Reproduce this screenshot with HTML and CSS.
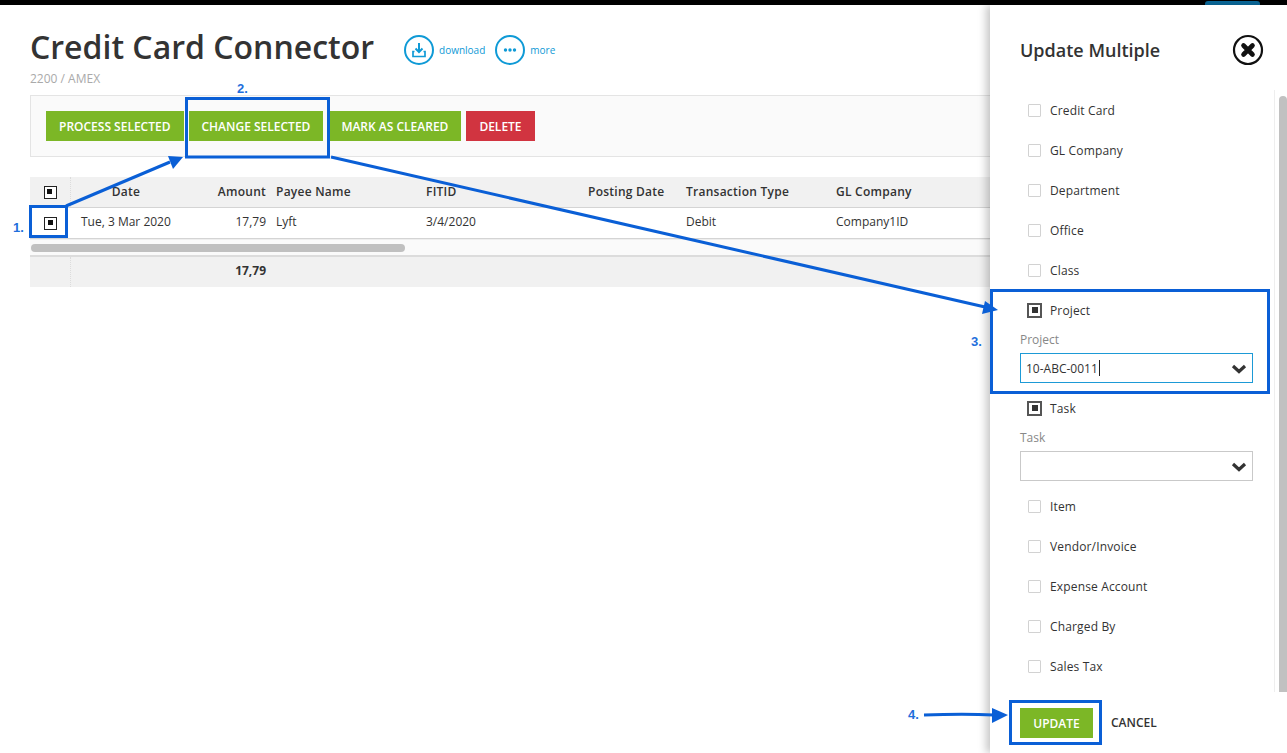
FILE: index.html
```html
<!DOCTYPE html>
<html lang="en">
<head>
<meta charset="utf-8">
<title>Credit Card Connector</title>
<link rel="stylesheet" href="styles.css">
</head>
<body>
<div class="topbar"><span class="toptab"></span></div>
<main class="main">
  <div class="titlerow">
    <h1 class="title">Credit Card Connector</h1>
    <div class="actions">
      <a class="action">
        <svg class="action-icon" width="30" height="30" viewBox="0 0 30 30"><circle cx="15" cy="15" r="14" fill="none" stroke="#0f9ad6" stroke-width="2"/><path d="M15 8v9M11.5 13.5 15 17l3.500-3.500" fill="none" stroke="#0f9ad6" stroke-width="2"/><path d="M10.500 16.500H9v5h12v-5h-1.500" fill="none" stroke="#0f9ad6" stroke-width="1.700"/></svg>
        <span>download</span>
      </a>
      <a class="action">
        <svg class="action-icon" width="30" height="30" viewBox="0 0 30 30"><circle cx="15" cy="15" r="14" fill="none" stroke="#0f9ad6" stroke-width="2"/><circle cx="10.500" cy="15" r="1.700" fill="#0f9ad6"/><circle cx="15" cy="15" r="1.700" fill="#0f9ad6"/><circle cx="19.500" cy="15" r="1.700" fill="#0f9ad6"/></svg>
        <span>more</span>
      </a>
    </div>
  </div>
  <div class="subtitle">2200 / AMEX</div>
  <div class="toolbar">
    <button class="btn">PROCESS SELECTED</button>
    <button class="btn">CHANGE SELECTED</button>
    <button class="btn">MARK AS CLEARED</button>
    <button class="btn btn-red">DELETE</button>
  </div>
  <div class="table">
    <div class="row row-head">
      <div class="cell-check"><span class="check check-table"></span></div>
      <div class="cell cell-center">Date</div>
      <div class="cell cell-right">Amount</div>
      <div class="cell">Payee Name</div>
      <div class="cell">FITID</div>
      <div class="cell">Posting Date</div>
      <div class="cell">Transaction Type</div>
      <div class="cell">GL Company</div>
    </div>
    <div class="row row-body">
      <div class="cell-check"><span class="check check-table"></span></div>
      <div class="cell cell-date">Tue, 3 Mar 2020</div>
      <div class="cell cell-right">17,79</div>
      <div class="cell">Lyft</div>
      <div class="cell">3/4/2020</div>
      <div class="cell"></div>
      <div class="cell">Debit</div>
      <div class="cell">Company1ID</div>
    </div>
    <div class="hscroll"><span class="hthumb"></span></div>
    <div class="row row-total">
      <div class="cell-check"></div>
      <div class="cell"></div>
      <div class="cell cell-right">17,79</div>
    </div>
  </div>
</main>

<aside class="panel">
  <header class="panel-head">
    <h2 class="panel-title">Update Multiple</h2>
    <svg class="close" width="32" height="32" viewBox="0 0 32 32"><circle cx="16" cy="16" r="14" fill="#fff" stroke="#111" stroke-width="2.200"/><path d="M11.500 11.500l9 9M20.500 11.500l-9 9" stroke="#111" stroke-width="4.600" stroke-linecap="round"/></svg>
  </header>
  <div class="panel-body">
    <div class="panel-list">
      <label class="opt"><span class="box"></span>Credit Card</label>
      <label class="opt"><span class="box"></span>GL Company</label>
      <label class="opt"><span class="box"></span>Department</label>
      <label class="opt"><span class="box"></span>Office</label>
      <label class="opt"><span class="box"></span>Class</label>
      <label class="opt"><span class="check check-panel"></span>Project</label>
      <div class="field">
        <div class="field-label">Project</div>
        <div class="select select-active"><span>10-ABC-0011</span><i class="caret"></i>
          <svg class="chev" width="16" height="10" viewBox="0 0 16 10"><path d="M2 2l6 5.500L14 2" fill="none" stroke="#333" stroke-width="3.200"/></svg>
        </div>
      </div>
      <label class="opt"><span class="check check-panel"></span>Task</label>
      <div class="field">
        <div class="field-label">Task</div>
        <div class="select">
          <svg class="chev" width="16" height="10" viewBox="0 0 16 10"><path d="M2 2l6 5.500L14 2" fill="none" stroke="#333" stroke-width="3.200"/></svg>
        </div>
      </div>
      <label class="opt"><span class="box"></span>Item</label>
      <label class="opt"><span class="box"></span>Vendor/Invoice</label>
      <label class="opt"><span class="box"></span>Expense Account</label>
      <label class="opt"><span class="box"></span>Charged By</label>
      <label class="opt"><span class="box"></span>Sales Tax</label>
    </div>
    <div class="vscroll"><span class="vthumb"></span></div>
  </div>
  <footer class="panel-foot">
    <button class="btn btn-update">UPDATE</button>
    <a class="cancel">CANCEL</a>
  </footer>
</aside>

<svg class="notes" width="1287" height="753" viewBox="0 0 1287 753">
  <g fill="none" stroke="#0a5fd6" stroke-width="3">
    <rect x="30.500" y="206.500" width="36" height="30"/>
    <rect x="186.500" y="98.500" width="142" height="58.500"/>
    <rect x="991.500" y="290.500" width="277" height="102"/>
    <rect x="1010.500" y="701.500" width="90" height="42"/>
    <path d="M66 206 170 162"/>
    <path d="M331 157 985 307"/>
    <path d="M924 715C950 714 975 714 994 715"/>
  </g>
  <g fill="#0a5fd6">
    <path d="M183 157 168 156 173 169Z"/>
    <path d="M998 310 985 301 982 314Z"/>
    <path d="M1008 715 992 708 992 723Z"/>
  </g>
</svg>
<span class="note note-1">1.</span>
<span class="note note-2">2.</span>
<span class="note note-3">3.</span>
<span class="note note-4">4.</span>
</body>
</html>
```
FILE: styles.css
```css
* { box-sizing: border-box; }
html, body { margin: 0; padding: 0; }
body {
  width: 1287px;
  height: 753px;
  overflow: hidden;
  position: relative;
  background: #fff;
  color: #333;
  font-family: "Open Sans", "Liberation Sans", sans-serif;
  font-size: 12px;
}
.topbar {
  height: 5px;
  background: #000;
  display: flex;
  justify-content: flex-end;
  align-items: flex-end;
  padding-right: 27px;
}
.toptab {
  width: 55px;
  height: 4px;
  background: #0a6a9c;
  border-radius: 3px 3px 0 0;
}
.main { padding: 22px 0 0 30px; width: 990px; }
.titlerow { display: flex; align-items: center; height: 40px; }
.title {
  margin: 0;
  font-size: 32px;
  line-height: 40px;
  font-weight: 600;
  color: #333;
}
.actions { display: flex; align-items: center; gap: 10px; margin-left: 30px; margin-top: 6px; }
.action { display: flex; align-items: center; gap: 5px; color: #0f9ad6; font-size: 10px; }
.action-icon { display: block; }
.subtitle { height: 28px; padding-top: 4px; line-height: 16px; color: #aaa; font-size: 12px; }
.toolbar {
  height: 62px;
  border: 1px solid #e4e4e4;
  border-right: 0;
  background: #fafafa;
  display: flex;
  align-items: center;
  gap: 5px;
  padding: 0 15px;
}
.btn {
  height: 30px;
  padding: 0 13px;
  border: 0;
  background: #7cb726;
  color: #fff;
  font-family: inherit;
  font-size: 12px;
  font-weight: 600;
  white-space: nowrap;
}
.btn-red { background: #d13440; }
.table { margin-top: 20px; }
.row {
  display: grid;
  grid-template-columns: 41px 110px 90px 150px 162px 98px 150px 149px;
  align-items: center;
}
.cell { padding: 0 5px 4px; white-space: nowrap; }
.cell-check { display: flex; justify-content: center; align-items: center; height: 100%; }
.cell-center { text-align: center; }
.cell-right { text-align: right; }
.cell-date { padding-left: 10px; }
.row-head {
  height: 31px;
  background: #f1f1f1;
  border-bottom: 1px solid #d4d4d4;
  font-weight: 600;
  letter-spacing: .25px;
}
.row-head .cell { padding-bottom: 2px; }
.row-head .cell-check, .row-total .cell-check { border-right: 1px dotted #dcdcdc; }
.row-body { height: 31px; border-bottom: 1px solid #d4d4d4; }
.hscroll {
  height: 18px;
  background: #fafafa;
  border-top: 1px solid #eee;
  border-bottom: 2px solid #dcdcdc;
  display: flex;
  align-items: center;
  padding-left: 1px;
}
.hthumb { width: 374px; height: 8px; background: #c0c0c0; border-radius: 4px; }
.row-total { height: 30px; background: #f1f1f1; font-weight: 700; }
.check { display: block; border-style: solid; border-color: #222; background: #fff; position: relative; }
.check::after { content: ""; position: absolute; background: #111; }
.check-table { width: 13px; height: 13px; border-width: 1.500px; }
.check-table::after { left: 2.500px; top: 2.500px; width: 5px; height: 5px; }
.check-panel { width: 15px; height: 15px; border-width: 2px; border-color: #555; margin: 0 8px 0 7px; }
.check-panel::after { left: 2.500px; top: 2.500px; width: 6px; height: 6px; background: #333; }
.panel {
  position: absolute;
  top: 5px;
  left: 990px;
  width: 297px;
  height: 748px;
  background: #fff;
  box-shadow: -4px 0 8px rgba(0, 0, 0, .22);
  display: flex;
  flex-direction: column;
}
.panel-head {
  height: 85px;
  flex: none;
  padding: 5px 23px 0 30px;
  display: flex;
  justify-content: space-between;
  align-items: center;
}
.panel-title { margin: 0; font-size: 18px; font-weight: 600; color: #333; }
.close { display: block; }
.panel-body { height: 602px; flex: none; display: flex; overflow: hidden; }
.panel-list { width: 285px; border-right: 1px solid #eee; padding: 0 22px 0 30px; flex: none; }
.vscroll { flex: 1; padding: 6px 0 0 4px; }
.vthumb { display: block; width: 8px; height: 596px; background: #c1c1c1; border-radius: 4px 4px 0 0; }
.opt { height: 40px; display: flex; align-items: center; font-size: 12px; color: #333; letter-spacing: .15px; }
.box {
  width: 13px;
  height: 13px;
  border: 1.500px solid #d2d2d2;
  border-radius: 1px;
  background: #fff;
  margin: 0 9px 0 8px;
}
.field { height: 58px; }
.field-label { height: 23px; line-height: 19px; color: #888; font-size: 12px; }
.select {
  width: 233px;
  height: 30px;
  border: 1px solid #c9c9c9;
  display: flex;
  align-items: center;
  padding: 0 5px;
  position: relative;
  font-size: 12px;
}
.select-active { border-color: #1d9ad6; }
.caret { display: block; width: 1px; height: 16px; background: #222; margin-left: 1px; }
.chev { position: absolute; right: 5px; top: 10px; }
.panel-foot {
  flex: 1;
  padding: 16px 0 0 30px;
  display: flex;
  align-items: flex-start;
  gap: 18px;
  background: #fff;
}
.btn-update { padding: 0; width: 73px; }
.cancel { line-height: 30px; font-weight: 600; color: #333; }
.notes { position: absolute; left: 0; top: 0; pointer-events: none; }
.note {
  position: absolute;
  font-family: "Liberation Sans", Arial, sans-serif;
  font-weight: 700;
  font-size: 13px;
  line-height: 14px;
  color: #1f6fdc;
}
.note-1 { left: 13px; top: 221px; }
.note-2 { left: 237px; top: 82px; }
.note-3 { left: 971px; top: 335px; }
.note-4 { left: 908px; top: 708px; }
```
